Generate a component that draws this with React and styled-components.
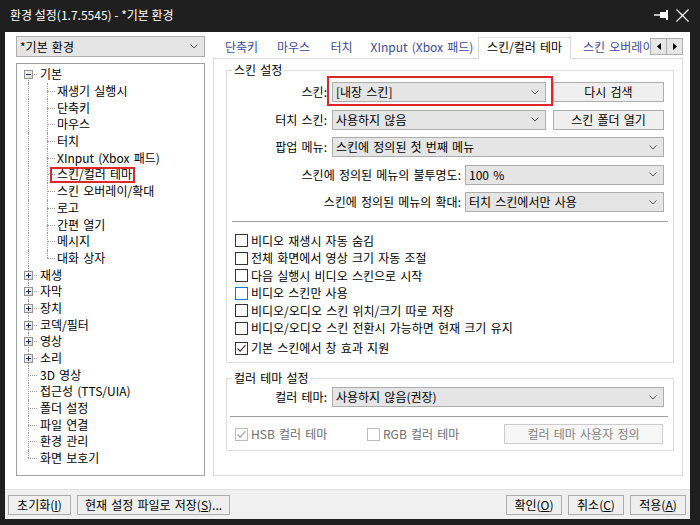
import styled, { createGlobalStyle } from "styled-components";

const FONT = `"Noto Sans CJK KR", "Noto Sans", sans-serif`;

const GlobalStyle = createGlobalStyle`
  html, body {
    margin: 0;
    padding: 0;
    background: #1f1f1f;
  }
  body {
    font-family: ${FONT};
    font-size: 12px;
    letter-spacing: 0;
    word-spacing: 1.5px;
    color: #000;
  }
  * {
    box-sizing: border-box;
  }
`;

const treeItems = [
  { label: "기본", level: 0, exp: "minus" },
  { label: "재생기 실행시", level: 1 },
  { label: "단축키", level: 1 },
  { label: "마우스", level: 1 },
  { label: "터치", level: 1 },
  { label: "XInput (Xbox 패드)", level: 1 },
  { label: "스킨/컬러 테마", level: 1, selected: true },
  { label: "스킨 오버레이/확대", level: 1 },
  { label: "로고", level: 1 },
  { label: "간편 열기", level: 1 },
  { label: "메시지", level: 1 },
  { label: "대화 상자", level: 1, lastChild: true },
  { label: "재생", level: 0, exp: "plus" },
  { label: "자막", level: 0, exp: "plus" },
  { label: "장치", level: 0, exp: "plus" },
  { label: "코덱/필터", level: 0, exp: "plus" },
  { label: "영상", level: 0, exp: "plus" },
  { label: "소리", level: 0, exp: "plus" },
  { label: "3D 영상", level: 0 },
  { label: "접근성 (TTS/UIA)", level: 0 },
  { label: "폴더 설정", level: 0 },
  { label: "파일 연결", level: 0 },
  { label: "환경 관리", level: 0 },
  { label: "화면 보호기", level: 0 },
];

const tabs = [
  { label: "단축키", w: 57 },
  { label: "마우스", w: 47 },
  { label: "터치", w: 49 },
  { label: "XInput (Xbox 패드)", w: 112 },
  { label: "스킨/컬러 테마", w: 93, active: true },
  { label: "스킨 오버레이", w: 90, left: true },
];

const checks = [
  { label: "비디오 재생시 자동 숨김" },
  { label: "전체 화면에서 영상 크기 자동 조절" },
  { label: "다음 실행시 비디오 스킨으로 시작" },
  { label: "비디오 스킨만 사용", focus: true },
  { label: "비디오/오디오 스킨 위치/크기 따로 저장" },
  { label: "비디오/오디오 스킨 전환시 가능하면 현재 크기 유지" },
  { label: "기본 스킨에서 창 효과 지원", checked: true, gap: true },
];

const Chevron = () => (
  <svg width="8" height="5" viewBox="0 0 8 5">
    <path d="M0.5 0.5 L4 4 L7.5 0.5" fill="none" stroke="#555" strokeWidth="1" />
  </svg>
);

const CheckMark = ({ color }) => (
  <svg width="11" height="11" viewBox="0 0 11 11">
    <path d="M1.5 5.5 L4.2 8.2 L9.5 2.2" fill="none" stroke={color} strokeWidth="1.2" />
  </svg>
);

const Expander = ({ kind }) => (
  <svg width="9" height="9" viewBox="0 0 9 9">
    <defs>
      <linearGradient id={`exp-${kind}`} x1="0" y1="0" x2="1" y2="1">
        <stop offset="0" stopColor="#ffffff" />
        <stop offset="1" stopColor="#d8d8d8" />
      </linearGradient>
    </defs>
    <rect x="0.5" y="0.5" width="8" height="8" fill={`url(#exp-${kind})`} stroke="#919191" />
    <path d="M2 4.5 H7" stroke="#1d2a5a" strokeWidth="1" />
    {kind === "plus" && <path d="M4.5 2 V7" stroke="#1d2a5a" strokeWidth="1" />}
  </svg>
);

const PinIcon = () => (
  <svg width="16" height="10" viewBox="0 0 16 10">
    <path d="M0 5 H6" stroke="#fff" strokeWidth="1.4" />
    <rect x="6" y="2" width="6" height="6" fill="#fff" />
    <rect x="12" y="0" width="2" height="10" fill="#fff" />
  </svg>
);

const CloseIcon = () => (
  <svg width="13" height="13" viewBox="0 0 13 13">
    <path d="M0.5 0.5 L12.5 12.5 M12.5 0.5 L0.5 12.5" stroke="#fff" strokeWidth="1.3" />
  </svg>
);

const Arrow = ({ dir }) => (
  <svg width="4" height="7" viewBox="0 0 4 7">
    {dir === "left" ? <path d="M4 0 L0 3.5 L4 7 Z" fill="#000" /> : <path d="M0 0 L4 3.5 L0 7 Z" fill="#000" />}
  </svg>
);

const CheckBox = ({ checked, focus, off }) => (
  <Box $tone={off ? "#bcbcbc" : focus ? "#0078d7" : "#333"}>
    {checked && <CheckMark color={off ? "#a0a0a0" : "#333"} />}
  </Box>
);

const App = () => {
  return (
    <>
      <GlobalStyle />
      <Window>
        <TitleBar>
          <Title>환경 설정(1.7.5545) - *기본 환경</Title>
          <TitleIcons>
            <PinIcon />
            <CloseIcon />
          </TitleIcons>
        </TitleBar>

        <Body>
          <Main>
            <LeftCol>
              <Combo $h={21}>
                <span>*기본 환경</span>
                <Chevron />
              </Combo>
              <Tree>
                {treeItems.map((item, i) => (
                  <TreeRow key={i}>
                    <RootGuide>
                      <VLine $x={11} $first={i === 0} $last={i === treeItems.length - 1} />
                      {item.level === 0 && <HLine $x={11} $w={9} />}
                      {item.exp && (
                        <ExpanderSlot>
                          <Expander kind={item.exp} />
                        </ExpanderSlot>
                      )}
                    </RootGuide>
                    {item.level === 1 && (
                      <ChildGuide>
                        <VLine $x={7} $last={item.lastChild} />
                        <HLine $x={7} $w={8} />
                      </ChildGuide>
                    )}
                    <TreeLabel $selected={item.selected}>{item.label}</TreeLabel>
                  </TreeRow>
                ))}
              </Tree>
            </LeftCol>

            <TabArea>
              <TabStrip>
                <TabViewport>
                  {tabs.map((t) => (
                    <Tab key={t.label} $w={t.w} $active={t.active} $left={t.left}>
                      {t.label}
                    </Tab>
                  ))}
                </TabViewport>
                <ScrollButtons>
                  <ScrollButton>
                    <Arrow dir="left" />
                  </ScrollButton>
                  <ScrollButton>
                    <Arrow dir="right" />
                  </ScrollButton>
                </ScrollButtons>
              </TabStrip>

              <Panel>
                <Group $mt={11}>
                  <Legend>스킨 설정</Legend>
                  <FormRows>
                    <FormRow>
                      <FieldLabel $w={100}>스킨:</FieldLabel>
                      <Highlight>
                        <Combo>
                          <span>[내장 스킨]</span>
                          <Chevron />
                        </Combo>
                      </Highlight>
                      <Button $w={111}>다시 검색</Button>
                    </FormRow>
                    <FormRow>
                      <FieldLabel $w={100}>터치 스킨:</FieldLabel>
                      <Field>
                        <Combo>
                          <span>사용하지 않음</span>
                          <Chevron />
                        </Combo>
                      </Field>
                      <Button $w={111}>스킨 폴더 열기</Button>
                    </FormRow>
                    <FormRow>
                      <FieldLabel $w={100}>팝업 메뉴:</FieldLabel>
                      <Field>
                        <Combo>
                          <span>스킨에 정의된 첫 번째 메뉴</span>
                          <Chevron />
                        </Combo>
                      </Field>
                    </FormRow>
                    <FormRow>
                      <FieldLabel $w={234}>스킨에 정의된 메뉴의 불투명도:</FieldLabel>
                      <Field $gap={4}>
                        <Combo>
                          <span>100 %</span>
                          <Chevron />
                        </Combo>
                      </Field>
                    </FormRow>
                    <FormRow>
                      <FieldLabel $w={234}>스킨에 정의된 메뉴의 확대:</FieldLabel>
                      <Field $gap={4}>
                        <Combo>
                          <span>터치 스킨에서만 사용</span>
                          <Chevron />
                        </Combo>
                      </Field>
                    </FormRow>
                  </FormRows>

                  <Separator $mt={9} $ml={5} />

                  <CheckList>
                    {checks.map((c) => (
                      <CheckRow key={c.label} $gap={c.gap}>
                        <CheckBox checked={c.checked} focus={c.focus} />
                        <CheckText>{c.label}</CheckText>
                      </CheckRow>
                    ))}
                  </CheckList>
                </Group>

                <Group $mt={15}>
                  <Legend>컬러 테마 설정</Legend>
                  <FormRows $pt={8}>
                    <FormRow>
                      <FieldLabel $w={100}>컬러 테마:</FieldLabel>
                      <Field>
                        <Combo>
                          <span>사용하지 않음(권장)</span>
                          <Chevron />
                        </Combo>
                      </Field>
                    </FormRow>
                  </FormRows>

                  <Separator $mt={9} $ml={3} />

                  <ThemeRow>
                    <ThemeCheck $w={132}>
                      <CheckBox checked off />
                      <CheckText $off>HSB 컬러 테마</CheckText>
                    </ThemeCheck>
                    <ThemeCheck>
                      <CheckBox off />
                      <CheckText $off>RGB 컬러 테마</CheckText>
                    </ThemeCheck>
                    <Button $w={159} $off $push>
                      컬러 테마 사용자 정의
                    </Button>
                  </ThemeRow>
                </Group>
              </Panel>
            </TabArea>
          </Main>

          <BottomBar>
            <Button $w={63}>
              초기화(<u>I</u>)
            </Button>
            <Button $w={153}>
              현재 설정 파일로 저장(<u>S</u>)...
            </Button>
            <Spacer />
            <Button $w={56}>
              확인(<u>O</u>)
            </Button>
            <Button $w={56}>
              취소(<u>C</u>)
            </Button>
            <Button $w={56}>
              적용(<u>A</u>)
            </Button>
          </BottomBar>
        </Body>
      </Window>
    </>
  );
};

export default App;

const Window = styled.div`
  width: 700px;
  height: 525px;
  background: #1f1f1f;
  display: flex;
  flex-direction: column;
`;

const TitleBar = styled.div`
  height: 32px;
  flex: none;
  display: flex;
  align-items: center;
  justify-content: space-between;
  padding: 0 11px 0 10px;
  color: #fff;
`;

const Title = styled.div`
  font-size: 12px;
  letter-spacing: 0;
  word-spacing: 0;
  line-height: 16px;
  margin-top: -2px;
`;

const TitleIcons = styled.div`
  display: flex;
  align-items: center;
  gap: 6px;
  margin-top: -2px;
`;

const Body = styled.div`
  flex: 1;
  margin: 0 10px 6px 5px;
  background: #fff;
  display: flex;
  flex-direction: column;
`;

const Main = styled.div`
  flex: 1;
  display: flex;
  padding: 4px 7px 13px 11px;
`;

const LeftCol = styled.div`
  width: 189px;
  display: flex;
  flex-direction: column;
  gap: 6px;
`;

const Combo = styled.div`
  height: ${(p) => p.$h || 20}px;
  background: #e5e5e5;
  border: 1px solid #adadad;
  display: flex;
  align-items: center;
  justify-content: space-between;
  padding: 0 6px 0 3px;
  white-space: nowrap;
  line-height: 14px;
`;

const Tree = styled.div`
  flex: 1;
  border: 1px solid #a0a0a0;
  padding-top: 2px;
  background: #fff;
`;

const TreeRow = styled.div`
  height: 16.7px;
  display: flex;
  align-items: stretch;
`;

const RootGuide = styled.div`
  position: relative;
  width: 23px;
  flex: none;
`;

const ChildGuide = styled.div`
  position: relative;
  width: 17px;
  flex: none;
`;

const VLine = styled.span`
  position: absolute;
  left: ${(p) => p.$x}px;
  top: ${(p) => (p.$first ? "50%" : "0")};
  bottom: ${(p) => (p.$last ? "50%" : "0")};
  border-left: 1px dotted #9a9a9a;
`;

const HLine = styled.span`
  position: absolute;
  left: ${(p) => p.$x}px;
  width: ${(p) => p.$w}px;
  top: 50%;
  border-top: 1px dotted #9a9a9a;
`;

const ExpanderSlot = styled.span`
  position: absolute;
  left: 7px;
  top: 50%;
  width: 9px;
  height: 9px;
  margin-top: -4px;
  display: flex;
`;

const TreeLabel = styled.span`
  position: relative;
  display: flex;
  align-items: center;
  line-height: 14px;
  white-space: nowrap;

  &::after {
    content: "";
    display: ${(p) => (p.$selected ? "block" : "none")};
    position: absolute;
    left: -7px;
    right: -3px;
    top: 1px;
    bottom: 0;
    border: 2px solid #e0262b;
  }
`;

const TabArea = styled.div`
  width: 470px;
  margin-left: 8px;
  display: flex;
  flex-direction: column;
`;

const TabStrip = styled.div`
  display: flex;
  height: 22px;
`;

const TabViewport = styled.div`
  flex: 1;
  height: 23px;
  display: flex;
  overflow: hidden;
  position: relative;
  z-index: 1;
`;

const Tab = styled.div`
  flex: none;
  width: ${(p) => p.$w}px;
  height: 22px;
  margin-top: 1px;
  line-height: 18px;
  text-align: ${(p) => (p.$left ? "left" : "center")};
  padding-left: ${(p) => (p.$left ? "11px" : "0")};
  white-space: nowrap;
  color: ${(p) => (p.$active ? "#000" : "#3a4a9c")};
  background: ${(p) => (p.$active ? "#fff" : "transparent")};
  border: 1px solid ${(p) => (p.$active ? "#d9d9d9" : "transparent")};
  border-bottom: none;
`;

const ScrollButtons = styled.div`
  display: flex;
  margin-top: 2px;
  height: 17px;
`;

const ScrollButton = styled.div`
  width: 17px;
  height: 17px;
  background: #e6e6e6;
  border: 1px solid #adadad;
  display: flex;
  align-items: center;
  justify-content: center;

  & + & {
    margin-left: -1px;
  }
`;

const Panel = styled.div`
  flex: 1;
  border: 1px solid #d9d9d9;
  background: #fff;
  padding: 0 8px 0 12px;
`;

const Group = styled.div`
  position: relative;
  border: 1px solid #dcdcdc;
  margin-top: ${(p) => p.$mt}px;
`;

const Legend = styled.span`
  position: absolute;
  top: -8px;
  left: 5px;
  padding: 0 2px;
  background: #fff;
  line-height: 14px;
`;

const FormRows = styled.div`
  display: flex;
  flex-direction: column;
  gap: 7.5px;
  padding: ${(p) => p.$pt ?? 11}px 9px 0 0;
`;

const FormRow = styled.div`
  display: flex;
  align-items: center;
  height: 20px;
`;

const FieldLabel = styled.span`
  width: ${(p) => p.$w}px;
  flex: none;
  text-align: right;
  white-space: nowrap;
  line-height: 14px;
`;

const Field = styled.div`
  flex: 1;
  margin-left: ${(p) => p.$gap ?? 5}px;
`;

const Highlight = styled.div`
  flex: 1;
  margin-left: 5px;
  position: relative;

  &::after {
    content: "";
    position: absolute;
    left: -5px;
    right: -7px;
    top: -6px;
    bottom: -4px;
    border: 2px solid #e0262b;
  }
`;

const Button = styled.button`
  font: inherit;
  letter-spacing: inherit;
  word-spacing: inherit;
  flex: none;
  width: ${(p) => p.$w}px;
  height: 20px;
  padding: 0;
  margin-left: ${(p) => (p.$push ? "auto" : "0")};
  margin-right: ${(p) => (p.$push ? "10px" : "0")};
  background: ${(p) => (p.$off ? "#f6f6f6" : "#efefef")};
  border: 1px solid ${(p) => (p.$off ? "#cccccc" : "#adadad")};
  color: ${(p) => (p.$off ? "#838383" : "#000")};
  line-height: 14px;
  white-space: nowrap;

  ${FormRow} & {
    margin-left: 7px;
  }
`;

const Separator = styled.div`
  margin: ${(p) => p.$mt}px 5px 0 ${(p) => p.$ml}px;
  border-top: 1px solid #a0a0a0;
`;

const CheckList = styled.div`
  padding: 10px 0 5px 8px;
`;

const CheckRow = styled.div`
  display: flex;
  align-items: center;
  height: 17.5px;
  margin-top: ${(p) => (p.$gap ? "2.5px" : "0")};
`;

const Box = styled.span`
  width: 13px;
  height: 13px;
  flex: none;
  border: 1px solid ${(p) => p.$tone};
  background: #fff;
  display: flex;
  align-items: center;
  justify-content: center;
`;

const CheckText = styled.span`
  margin-left: 3px;
  line-height: 14px;
  white-space: nowrap;
  color: ${(p) => (p.$off ? "#6d6d6d" : "#000")};
`;

const ThemeRow = styled.div`
  display: flex;
  align-items: center;
  height: 20px;
  margin: 7px 0 6px;
  padding-left: 8px;
`;

const ThemeCheck = styled.div`
  display: flex;
  align-items: center;
  width: ${(p) => (p.$w ? `${p.$w}px` : "auto")};
`;

const BottomBar = styled.div`
  height: 30px;
  flex: none;
  display: flex;
  align-items: center;
  gap: 7px;
  padding: 0 4px 0 3px;
  background: #f0f0f0;
  border-top: 1px solid #dfdfdf;

  & > button + button {
    margin-left: -1px;
  }
`;

const Spacer = styled.div`
  flex: 1;
`;
